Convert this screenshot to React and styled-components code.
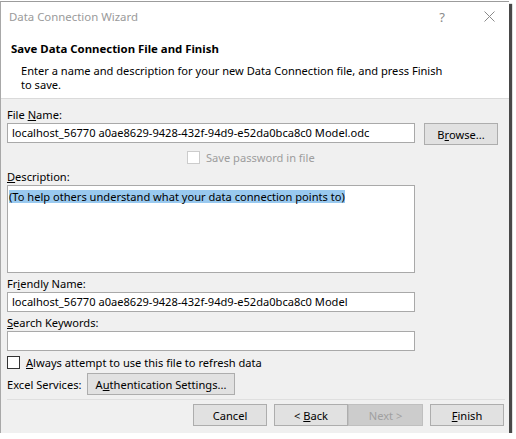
import React from 'react'
import styled, { createGlobalStyle } from 'styled-components'

const GlobalStyle = createGlobalStyle`
  html, body {
    margin: 0;
    padding: 0;
    background: #ffffff;
  }
  body {
    font-family: "Noto Sans", "Open Sans", sans-serif;
    font-size: 11.1px;
    color: #000;
  }
`

const Window = styled.div`
  box-sizing: border-box;
  width: 509px;
  height: 432px;
  margin-top: 1px;
  display: flex;
  flex-direction: column;
  background: #f0f0f0;
  border-top: 1px solid #9c9c9c;
  border-left: 1px solid #a8a8a8;
  box-shadow: 3px 3px 1px rgba(40, 40, 40, 0.85);
`

const Header = styled.div`
  background: #fff;
  height: 96px;
  border-bottom: 1px solid #dadada;
  display: flex;
  flex-direction: column;
`

const TitleBar = styled.div`
  height: 29px;
  display: flex;
  align-items: center;
  gap: 7px;
  padding-left: 8px;
  color: #9a9a9a;
`

const TitleText = styled.div`
  flex: 1;
  font-size: 11.4px;
`

const TitleIcon = styled.div`
  width: 40px;
  display: flex;
  justify-content: center;
  align-items: center;
  color: #8a8a8a;
  font-size: 13px;
`

const Heading = styled.div`
  font-weight: bold;
  font-size: 11.4px;
  padding: 10px 0 0 10px;
  line-height: 16px;
`

const Intro = styled.div`
  padding: 7px 0 0 20px;
  width: 428px;
  line-height: 14px;
`

const Body = styled.div`
  padding: 8px 0 0 6px;
  display: flex;
  flex-direction: column;
`

const Label = styled.div`
  height: 15px;
  line-height: 15px;
  margin-top: ${p => p.$gap || 0}px;
  margin-bottom: 1px;
`

const Row = styled.div`
  display: flex;
  align-items: flex-start;
  gap: 9px;
`

const Field = styled.div`
  box-sizing: border-box;
  width: 408px;
  height: ${p => p.$h || 20}px;
  background: #fff;
  border: 1px solid #a9a9a9;
  padding: ${p => (p.$multi ? '2px 1px' : '0 4px')};
  line-height: 18px;
  white-space: nowrap;
  overflow: hidden;
`

const Selected = styled.span`
  background: #99c9ef;
  line-height: 13px;
  display: inline-block;
`

const Button = styled.div`
  box-sizing: border-box;
  width: ${p => p.$w || 74}px;
  height: 22px;
  display: flex;
  align-items: center;
  justify-content: center;
  background: ${p => (p.$disabled ? '#cccccc' : '#e1e1e1')};
  border: 1px solid ${p => (p.$disabled ? '#bfbfbf' : '#adadad')};
  color: ${p => (p.$disabled ? '#a0a0a0' : '#000')};
  flex-shrink: 0;
`

const CheckRow = styled.div`
  display: flex;
  align-items: center;
  gap: 6px;
  height: 13px;
  margin-top: ${p => p.$gap || 0}px;
  padding-left: ${p => p.$indent || 0}px;
  color: ${p => (p.$disabled ? '#9d9d9d' : '#000')};
`

const Box = styled.span`
  box-sizing: border-box;
  width: 13px;
  height: 13px;
  background: #fff;
  border: 1px solid ${p => (p.$disabled ? '#cccccc' : '#333')};
`

const ServicesRow = styled.div`
  display: flex;
  align-items: center;
  margin-top: 4px;
`

const ServicesLabel = styled.span`
  width: 80px;
`

const Divider = styled.div`
  height: 1px;
  background: #dfdfdf;
  margin: 4px 4px 0 0;
`

const Footer = styled.div`
  display: flex;
  justify-content: flex-end;
  padding: 4px 5px 0 0;
`

const FooterGroup = styled.div`
  display: flex;
  margin-left: 7px;
`

function CloseIcon() {
  return (
    <svg width="11" height="11" viewBox="0 0 11 11">
      <path d="M0.5 0.5 L10.5 10.5 M10.5 0.5 L0.5 10.5" stroke="#8a8a8a" strokeWidth="1" fill="none" />
    </svg>
  )
}

export default function App() {
  return (
    <>
      <GlobalStyle />
      <Window>
        <Header>
          <TitleBar>
            <TitleText>Data Connection Wizard</TitleText>
            <TitleIcon>?</TitleIcon>
            <TitleIcon><CloseIcon /></TitleIcon>
          </TitleBar>
          <Heading>Save Data Connection File and Finish</Heading>
          <Intro>
            Enter a name and description for your new Data Connection file, and press Finish to save.
          </Intro>
        </Header>
        <Body>
          <Label>File <u>N</u>ame:</Label>
          <Row>
            <Field>localhost_56770 a0ae8629-9428-432f-94d9-e52da0bca8c0 Model.odc</Field>
            <Button><span>B<u>r</u>owse...</span></Button>
          </Row>
          <CheckRow $disabled $indent={180} $gap={6}>
            <Box $disabled />
            <span>Save password in file</span>
          </CheckRow>
          <Label $gap={5}><u>D</u>escription:</Label>
          <Field $h={88} $multi>
            <Selected>(To help others understand what your data connection points to)</Selected>
          </Field>
          <Label $gap={3}>Fr<u>i</u>endly Name:</Label>
          <Field>localhost_56770 a0ae8629-9428-432f-94d9-e52da0bca8c0 Model</Field>
          <Label $gap={3}><u>S</u>earch Keywords:</Label>
          <Field />
          <CheckRow $gap={5}>
            <Box />
            <span><u>A</u>lways attempt to use this file to refresh data</span>
          </CheckRow>
          <ServicesRow>
            <ServicesLabel>Excel Services:</ServicesLabel>
            <Button $w={148}><span>A<u>u</u>thentication Settings...</span></Button>
          </ServicesRow>
          <Divider />
        </Body>
        <Footer>
          <Button>Cancel</Button>
          <FooterGroup>
            <Button><span>&lt; <u>B</u>ack</span></Button>
            <Button $disabled $w={75}>Next &gt;</Button>
          </FooterGroup>
          <FooterGroup>
            <Button><span><u>F</u>inish</span></Button>
          </FooterGroup>
        </Footer>
      </Window>
    </>
  )
}
